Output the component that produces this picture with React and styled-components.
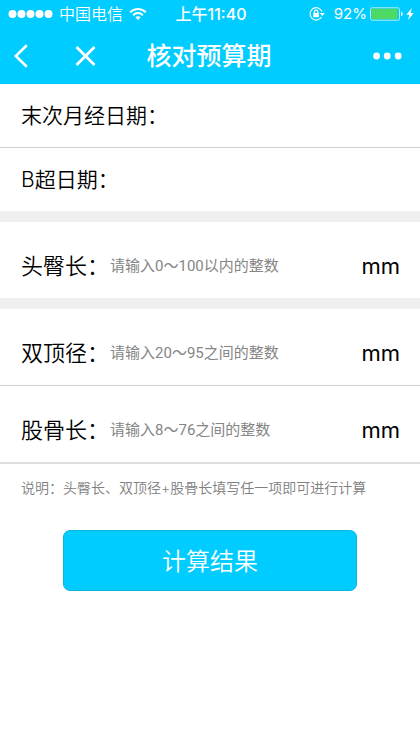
import React from "react";
import styled, { createGlobalStyle } from "styled-components";

const GlobalStyle = createGlobalStyle`
    * {
        box-sizing: border-box;
    }
    body {
        margin: 0;
        background: #fff;
        color: #000;
        font-family: Inter, "Noto Sans CJK SC", sans-serif;
    }
    button, input {
        font-family: inherit;
    }
`
const Header = styled.header`
    background: #00ccff;
    color: #fff;
`
const StatusBar = styled.div`
    display: grid;
    grid-template-columns: 1fr auto 1fr;
    align-items: center;
    height: 28px;
    padding: 0 6px 0 8px;
    font-size: 16px;
    line-height: 28px;
`
const StatusGroup = styled.div`
    display: flex;
    align-items: center;
    justify-content: ${props => props.$end ? "flex-end" : "flex-start"};
    gap: ${props => props.$end ? "3px" : "6px"};
    white-space: nowrap;
`
const Carrier = styled.span`
    font-weight: 350;
`
const Time = styled.span`
    font-weight: 500;
`
const Percent = styled.span`
    font-size: 15px;
    margin-left: 6px;
`
const NavBar = styled.nav`
    display: grid;
    grid-template-columns: 1fr auto 1fr;
    align-items: center;
    height: 56px;
    padding: 0 14px 0 12px;
`
const NavGroup = styled.div`
    display: flex;
    gap: 40px;
    justify-content: ${props => props.$end ? "flex-end" : "flex-start"};
`
const IconButton = styled.button`
    display: flex;
    padding: 0;
    border: 0;
    background: none;
    color: inherit;
`
const Title = styled.h1`
    margin: 0;
    font-size: 25px;
    line-height: 56px;
    font-weight: 500;
`
const Section = styled.section`
    border-bottom: ${props => props.$last ? "0" : "11px solid #efefef"};
`
const Row = styled.div`
    display: flex;
    align-items: center;
    box-sizing: content-box;
    height: ${props => props.$tall ? "64px" : "63px"};
    padding: ${props => props.$tall ? "12px 20px 0 21px" : "0 20px 0 21px"};
    border-bottom: ${props => props.$line || 0}px solid ${props => props.$line > 1 ? "#dedede" : "#d0d0d0"};
`
const Label = styled.label`
    flex: none;
    font-size: ${props => props.$small ? "21px" : "22px"};
    line-height: 32px;
    font-weight: 350;
`
const Field = styled.input`
    flex: 1;
    min-width: 0;
    height: 32px;
    padding: 0 0 0 1px;
    border: 0;
    outline: 0;
    background: none;
    font-family: Roboto, "Noto Sans CJK SC", sans-serif;
    font-size: 15px;
    &::placeholder {
        color: #858585;
        opacity: 1;
    }
`
const Unit = styled.span`
    font-size: 22px;
    line-height: 32px;
`
const Note = styled.p`
    margin: 0;
    padding: 12px 21px;
    color: #808080;
    font-size: 14px;
    line-height: 24px;
    font-weight: 350;
`
const Actions = styled.div`
    padding: 18px 15%;
`
const Submit = styled.button`
    display: block;
    width: 100%;
    height: 61px;
    padding: 0 0 2px;
    border: 1px solid #0cb4e0;
    border-radius: 7px;
    background: #00ccff;
    color: #fff;
    font-size: 24px;
    font-weight: 350;
`

const Signal = () => (
    <svg width="45" height="10" viewBox="0 0 45 10" fill="#fff">
        {[4, 13, 22, 31, 40].map(x => <circle key={x} cx={x + 0.5} cy="5" r="4" />)}
    </svg>
);

const Wifi = () => (
    <svg width="18" height="14" viewBox="0 0 18 14" fill="none" stroke="#fff" strokeWidth="2">
        <path d="M1.2 5.2C5.6 .8 12.4 .8 16.8 5.2" />
        <path d="M4.1 8.2C6.8 5.4 11.2 5.4 13.9 8.2" />
        <path d="M9 13L6.3 10.2C7.8 8.8 10.2 8.8 11.7 10.2Z" fill="#fff" stroke="none" />
    </svg>
);

const RotationLock = () => (
    <svg width="16" height="16" viewBox="0 0 16 16" fill="none" stroke="#fff">
        <path d="M12.6 11A6.2 6.2 0 1 1 13 5.6" strokeWidth="1.1" />
        <path d="M10.8 7H15.8L13.3 10Z" fill="#fff" stroke="none" />
        <rect x="4.3" y="7" width="5.6" height="4.2" fill="#fff" stroke="none" />
        <path d="M5.4 7V5.8A1.7 1.7 0 0 1 8.8 5.8V7" strokeWidth="1.2" />
    </svg>
);

const Battery = () => (
    <svg width="33" height="14" viewBox="0 0 33 14">
        <rect x=".5" y=".8" width="29" height="12.4" rx="1.8" fill="none" stroke="#b5eefb" />
        <rect x="1.4" y="1.7" width="26" height="10.6" rx=".8" fill="#4cd964" />
        <path d="M31 4.6Q32.8 5.2 32.8 7T31 9.4Z" fill="#d8f7ff" />
    </svg>
);

const Bolt = () => (
    <svg width="8" height="12" viewBox="0 0 8 12" fill="#fff">
        <path d="M5.8 0L.4 6.8H3.4L2 12L7.8 4.9H4.7Z" />
    </svg>
);

const Back = () => (
    <svg width="18" height="26" viewBox="0 0 18 26" fill="none" stroke="#fff" strokeWidth="2.6">
        <path d="M14.8 2.2L3.8 13L14.8 23.8" />
    </svg>
);

const Close = () => (
    <svg width="32" height="26" viewBox="0 0 32 26" fill="none" stroke="#fff" strokeWidth="2.8">
        <path d="M6.5 4L24.5 22M24.5 4L6.5 22" />
    </svg>
);

const More = () => (
    <svg width="34" height="10" viewBox="0 0 34 10" fill="#fff">
        <circle cx="4.6" cy="5" r="3.4" />
        <circle cx="15.2" cy="5" r="3.4" />
        <circle cx="26.2" cy="5" r="3.4" />
    </svg>
);

const LengthRow = ({ id, label, placeholder, line }) => (
    <Row $tall $line={line}>
        <Label htmlFor={id}>{label}</Label>
        <Field id={id} inputMode="numeric" placeholder={placeholder} />
        <Unit>mm</Unit>
    </Row>
);

const App = () => {
    return (
        <>
            <GlobalStyle />
            <Header>
                <StatusBar>
                    <StatusGroup>
                        <Signal />
                        <Carrier>中国电信</Carrier>
                        <Wifi />
                    </StatusGroup>
                    <Time>上午11:40</Time>
                    <StatusGroup $end>
                        <RotationLock />
                        <Percent>92%</Percent>
                        <Battery />
                        <Bolt />
                    </StatusGroup>
                </StatusBar>
                <NavBar>
                    <NavGroup>
                        <IconButton aria-label="返回"><Back /></IconButton>
                        <IconButton aria-label="关闭"><Close /></IconButton>
                    </NavGroup>
                    <Title>核对预算期</Title>
                    <NavGroup $end>
                        <IconButton aria-label="更多"><More /></IconButton>
                    </NavGroup>
                </NavBar>
            </Header>
            <main>
                <Section>
                    <Row $line={1}>
                        <Label $small htmlFor="period">末次月经日期：</Label>
                        <Field id="period" />
                    </Row>
                    <Row>
                        <Label $small htmlFor="scan">B超日期：</Label>
                        <Field id="scan" />
                    </Row>
                </Section>
                <Section>
                    <LengthRow id="crl" label="头臀长：" placeholder="请输入0～100以内的整数" />
                </Section>
                <Section $last>
                    <LengthRow id="bpd" label="双顶径：" placeholder="请输入20～95之间的整数" line={1} />
                    <LengthRow id="fl" label="股骨长：" placeholder="请输入8～76之间的整数" line={2} />
                </Section>
                <Note>说明：头臀长、双顶径+股骨长填写任一项即可进行计算</Note>
                <Actions>
                    <Submit type="button">计算结果</Submit>
                </Actions>
            </main>
        </>
    );
};
export default App;
